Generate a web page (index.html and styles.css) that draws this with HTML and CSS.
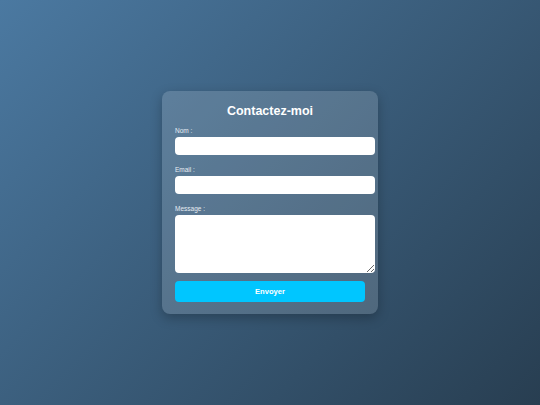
FILE: index.html
```html
<!DOCTYPE html>
<html lang="fr">
<head>
<meta charset="utf-8">
<title>Contactez-moi</title>
<link rel="stylesheet" href="styles.css">
</head>
<body>
<main class="page">
  <form class="card">
    <h2 class="title">Contactez-moi</h2>
    <label class="label" for="nom">Nom :</label>
    <input class="field" id="nom" type="text">
    <label class="label" for="email">Email :</label>
    <input class="field" id="email" type="email">
    <label class="label" for="message">Message :</label>
    <textarea class="field area" id="message"></textarea>
    <button class="btn" type="button">Envoyer</button>
  </form>
</main>
</body>
</html>
```
FILE: styles.css
```css
html, body {
  margin: 0;
  padding: 0;
  height: 100%;
}
body {
  font-family: "Liberation Sans", Arial, sans-serif;
  background: linear-gradient(135deg, #4b79a1, #283e51);
}
.page {
  height: 100%;
  display: flex;
  align-items: center;
  justify-content: center;
}
.card {
  width: 190px;
  padding: 12px 13px;
  background: rgba(255, 255, 255, 0.15);
  border-radius: 8px;
  box-shadow: 0 4px 12px rgba(0, 0, 0, 0.25);
  display: flex;
  flex-direction: column;
  align-items: flex-start;
}
.title {
  align-self: stretch;
  margin: 0 0 7px;
  font-size: 12.5px;
  line-height: 16px;
  font-weight: bold;
  color: #ffffff;
  text-align: center;
}
.label {
  font-size: 6.5px;
  line-height: 9px;
  color: #e6ecf2;
  margin-bottom: 2px;
}
.field {
  width: 100%;
  height: 18px;
  padding: 0 5px;
  box-sizing: content-box;
  border: none;
  border-radius: 4px;
  background: #ffffff;
  margin: 0 0 10px;
  font-family: inherit;
  font-size: 7px;
  outline: none;
}
.area {
  height: 58px;
  margin-bottom: 8px;
  display: block;
}
.btn {
  width: 100%;
  height: 21px;
  border: none;
  border-radius: 4px;
  background: #00c6ff;
  color: #ffffff;
  font-family: inherit;
  font-weight: bold;
  font-size: 7.6px;
  padding: 0;
}
```
